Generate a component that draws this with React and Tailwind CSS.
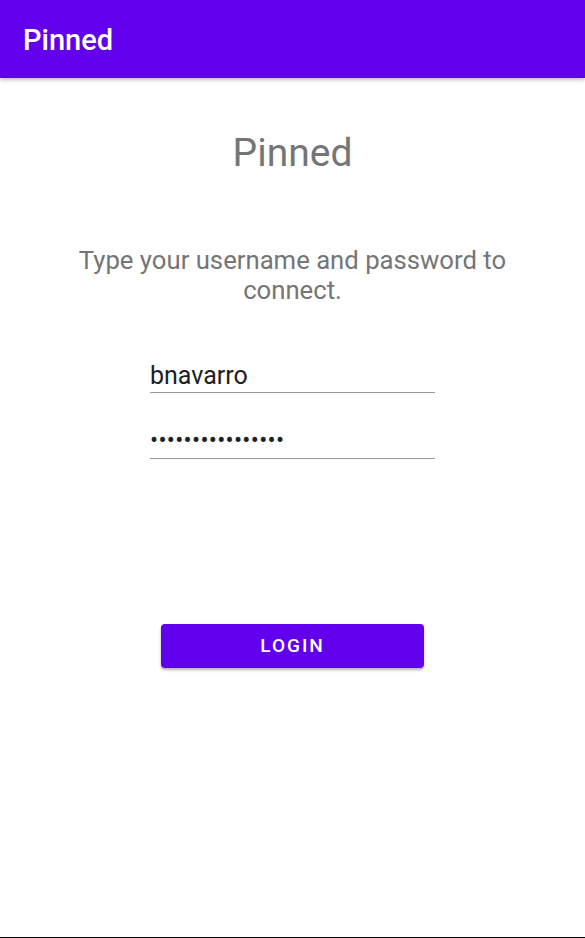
export default function App() {
  return (
    <div className="relative w-[585px] h-[938px] bg-white overflow-hidden" style={{ fontFamily: "Roboto, 'Noto Sans', sans-serif" }}>
      <div className="h-[78px] bg-[#6200ee] flex items-center pl-[23px] pt-[3px] shadow-[0_2px_4px_rgba(0,0,0,0.25)] relative z-10">
        <span className="text-white text-[29px] font-medium leading-none">Pinned</span>
      </div>
      <div className="flex flex-col items-center">
        <div className="mt-[53px] text-[39px] leading-[44px] text-[#757575]">Pinned</div>
        <div className="mt-[70px] w-[460px] text-center text-[25.7px] leading-[30px] text-[#757575]">
          Type your username and password to connect.
        </div>
        <div className="mt-[55px] w-[285px]">
          <div className="text-[25px] leading-[32px] text-[#212121] border-b border-[#999999]">bnavarro</div>
          <div className="mt-[31px] text-[24px] leading-[32px] text-[#212121] pb-[2px] border-b border-[#999999] tracking-[0.3px]">••••••••••••••••</div>
        </div>
        <button className="mt-[165px] w-[263px] h-[44px] rounded-[4px] bg-[#6200ee] text-white text-[19px] font-medium tracking-[2px] shadow-[0_2px_3px_rgba(0,0,0,0.3)]">
          LOGIN
        </button>
      </div>
      <div className="absolute left-0 right-0 bottom-0 h-[1px] bg-black"></div>
    </div>
  );
}
